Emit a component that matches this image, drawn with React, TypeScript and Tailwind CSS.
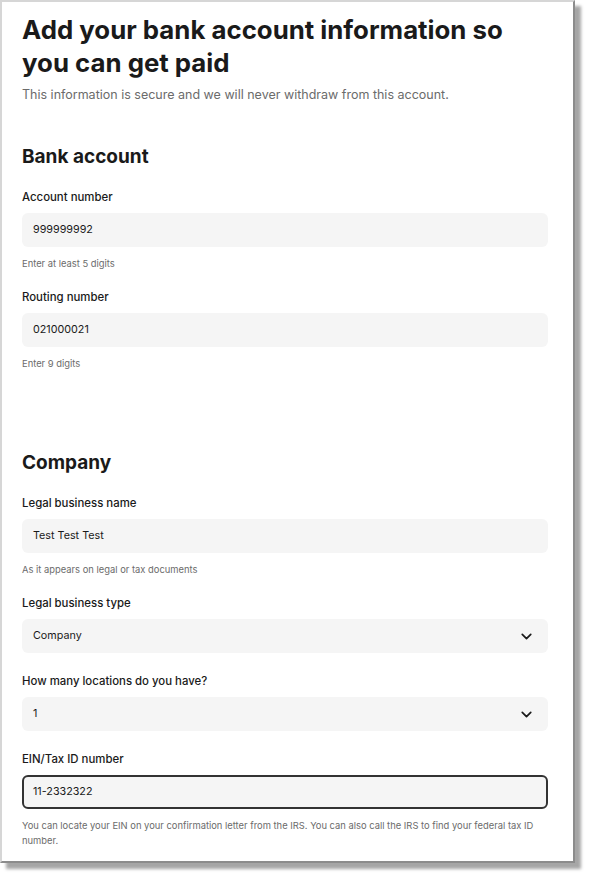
import React from "react";
import { ChevronDown } from "lucide-react";

type FieldProps = {
  label: string;
  value: string;
  helper?: string;
  select?: boolean;
  focused?: boolean;
};

const Field = ({ label, value, helper, select, focused }: FieldProps) => {
  return (
    <div className="flex flex-col">
      <label className="h-[16px] text-[11.4px] leading-[16px] font-medium text-[#1a1a1a]">
        {label}
      </label>
      <div
        className={
          focused
            ? "mt-[8px] flex h-[34px] items-center rounded-[6px] border-2 border-[#333333] bg-[#f5f5f5] px-[9px] text-[10.75px] text-[#1a1a1a]"
            : "mt-[8px] flex h-[34px] items-center rounded-[6px] bg-[#f5f5f5] px-[11px] text-[10.75px] text-[#1a1a1a]"
        }
      >
        <span className="flex-1">{value}</span>
        {select && (
          <ChevronDown size={17} strokeWidth={2.4} className="mr-[2px] text-[#1a1a1a]" />
        )}
      </div>
      {helper && (
        <p className="mt-[9px] pr-[4px] text-[9.4px] leading-[15px] text-[#6b6b6b]">{helper}</p>
      )}
    </div>
  );
};

export default function App() {
  return (
    <div
      className="h-[878px] w-[589px] bg-white"
      style={{ fontFamily: "Inter, 'Noto Sans', sans-serif" }}
    >
      <div className="h-[863px] w-[575px] border-2 border-t-[#d6d6d6] border-l-[#d6d6d6] border-r-[#8c8c8c] border-b-[#8c8c8c] bg-white pt-[11px] pr-[25px] pl-[20px] shadow-[6px_6px_3px_rgba(0,0,0,0.35)]">
        <h1 className="max-w-[500px] text-[25.8px] leading-[33px] font-bold text-[#1a1a1a]">
          Add your bank account information so you can get paid
        </h1>
        <p className="mt-[7px] text-[12.5px] leading-[18px] text-[#6b6b6b]">
          This information is secure and we will never withdraw from this account.
        </p>

        {/* bank account */}
        <h2 className="mt-[39px] text-[19px] leading-[28px] font-bold text-[#1a1a1a]">
          Bank account
        </h2>
        <div className="mt-[18px] flex flex-col gap-[18px]">
          <Field label="Account number" value="999999992" helper="Enter at least 5 digits" />
          <Field label="Routing number" value="021000021" helper="Enter 9 digits" />
        </div>

        {/* company */}
        <h2 className="mt-[78px] text-[19px] leading-[28px] font-bold text-[#1a1a1a]">
          Company
        </h2>
        <div className="mt-[18px] flex flex-col gap-[18px]">
          <Field
            label="Legal business name"
            value="Test Test Test"
            helper="As it appears on legal or tax documents"
          />
        </div>
        <div className="mt-[18px] flex flex-col gap-[20px]">
          <Field label="Legal business type" value="Company" select />
          <Field label="How many locations do you have?" value="1" select />
          <Field
            label="EIN/Tax ID number"
            value="11-2332322"
            focused
            helper="You can locate your EIN on your confirmation letter from the IRS. You can also call the IRS to find your federal tax ID number."
          />
        </div>
      </div>
    </div>
  );
}
